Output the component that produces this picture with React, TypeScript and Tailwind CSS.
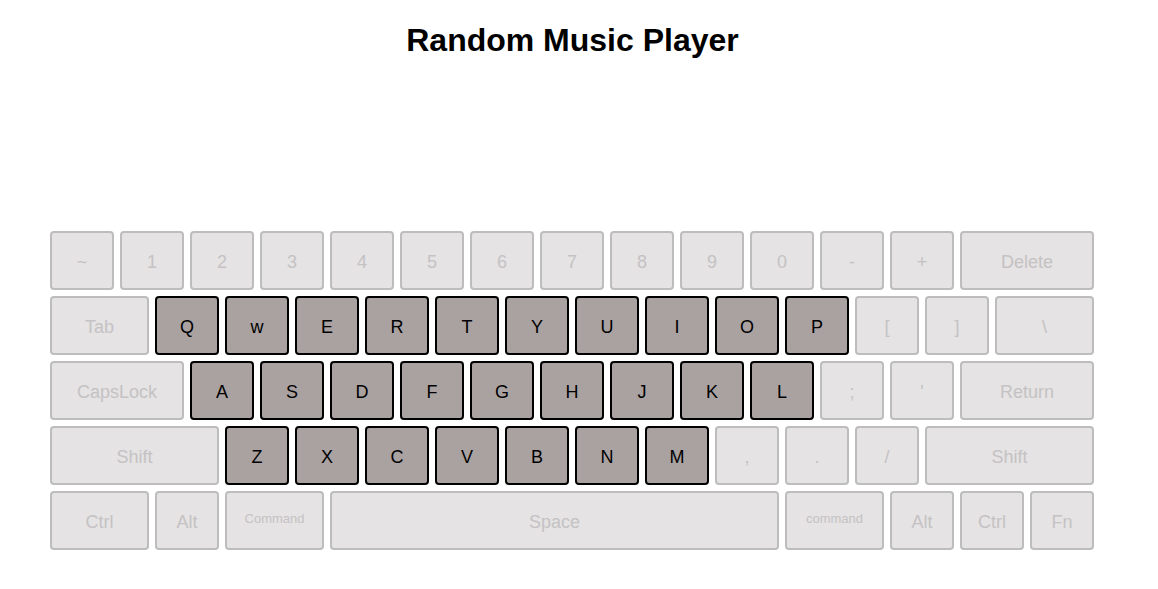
import React from "react";

type K = { l: string; w?: number; on?: boolean; sm?: boolean };

const rows: K[][] = [
  [
    { l: "~" }, { l: "1" }, { l: "2" }, { l: "3" }, { l: "4" }, { l: "5" }, { l: "6" },
    { l: "7" }, { l: "8" }, { l: "9" }, { l: "0" }, { l: "-" }, { l: "+" }, { l: "Delete", w: 134 },
  ],
  [
    { l: "Tab", w: 99 },
    ...["Q", "w", "E", "R", "T", "Y", "U", "I", "O", "P"].map((l) => ({ l, on: true })),
    { l: "[" }, { l: "]" }, { l: "\\", w: 99 },
  ],
  [
    { l: "CapsLock", w: 134 },
    ...["A", "S", "D", "F", "G", "H", "J", "K", "L"].map((l) => ({ l, on: true })),
    { l: ";" }, { l: "'" }, { l: "Return", w: 134 },
  ],
  [
    { l: "Shift", w: 169 },
    ...["Z", "X", "C", "V", "B", "N", "M"].map((l) => ({ l, on: true })),
    { l: "," }, { l: "." }, { l: "/" }, { l: "Shift", w: 169 },
  ],
  [
    { l: "Ctrl", w: 99 }, { l: "Alt" }, { l: "Command", w: 99, sm: true }, { l: "Space", w: 449 },
    { l: "command", w: 99, sm: true }, { l: "Alt" }, { l: "Ctrl" }, { l: "Fn" },
  ],
];

function Key({ k }: { k: K }) {
  const base =
    "h-[59px] rounded-[4px] border-2 flex items-center justify-center shrink-0 leading-none";
  const cls = k.on
    ? "bg-[#aaa2a0] border-black text-black"
    : "bg-[#e5e3e4] border-[#bdbdbd] text-[#c4c2c3]";
  return (
    <div className={`${base} ${cls} ${k.sm ? "text-[13px] pb-[4px]" : "text-[18px] pt-[2px]"}`} style={{ width: k.w ?? 64 }}>
      {k.l}
    </div>
  );
}

export default function App() {
  return (
    <div className="w-[1145px] bg-white min-h-[589px]" style={{ fontFamily: '"Liberation Sans", Arial, sans-serif' }}>
      <h1 className="text-[32px] font-bold text-center text-black pt-[22px] leading-[37px]">
        Random Music Player
      </h1>
      <div className="ml-[50px] mt-[172px] flex flex-col gap-[6px]">
        {rows.map((r, i) => (
          <div key={i} className="flex gap-[6px]">
            {r.map((k, j) => (
              <Key key={j} k={k} />
            ))}
          </div>
        ))}
      </div>
    </div>
  );
}
